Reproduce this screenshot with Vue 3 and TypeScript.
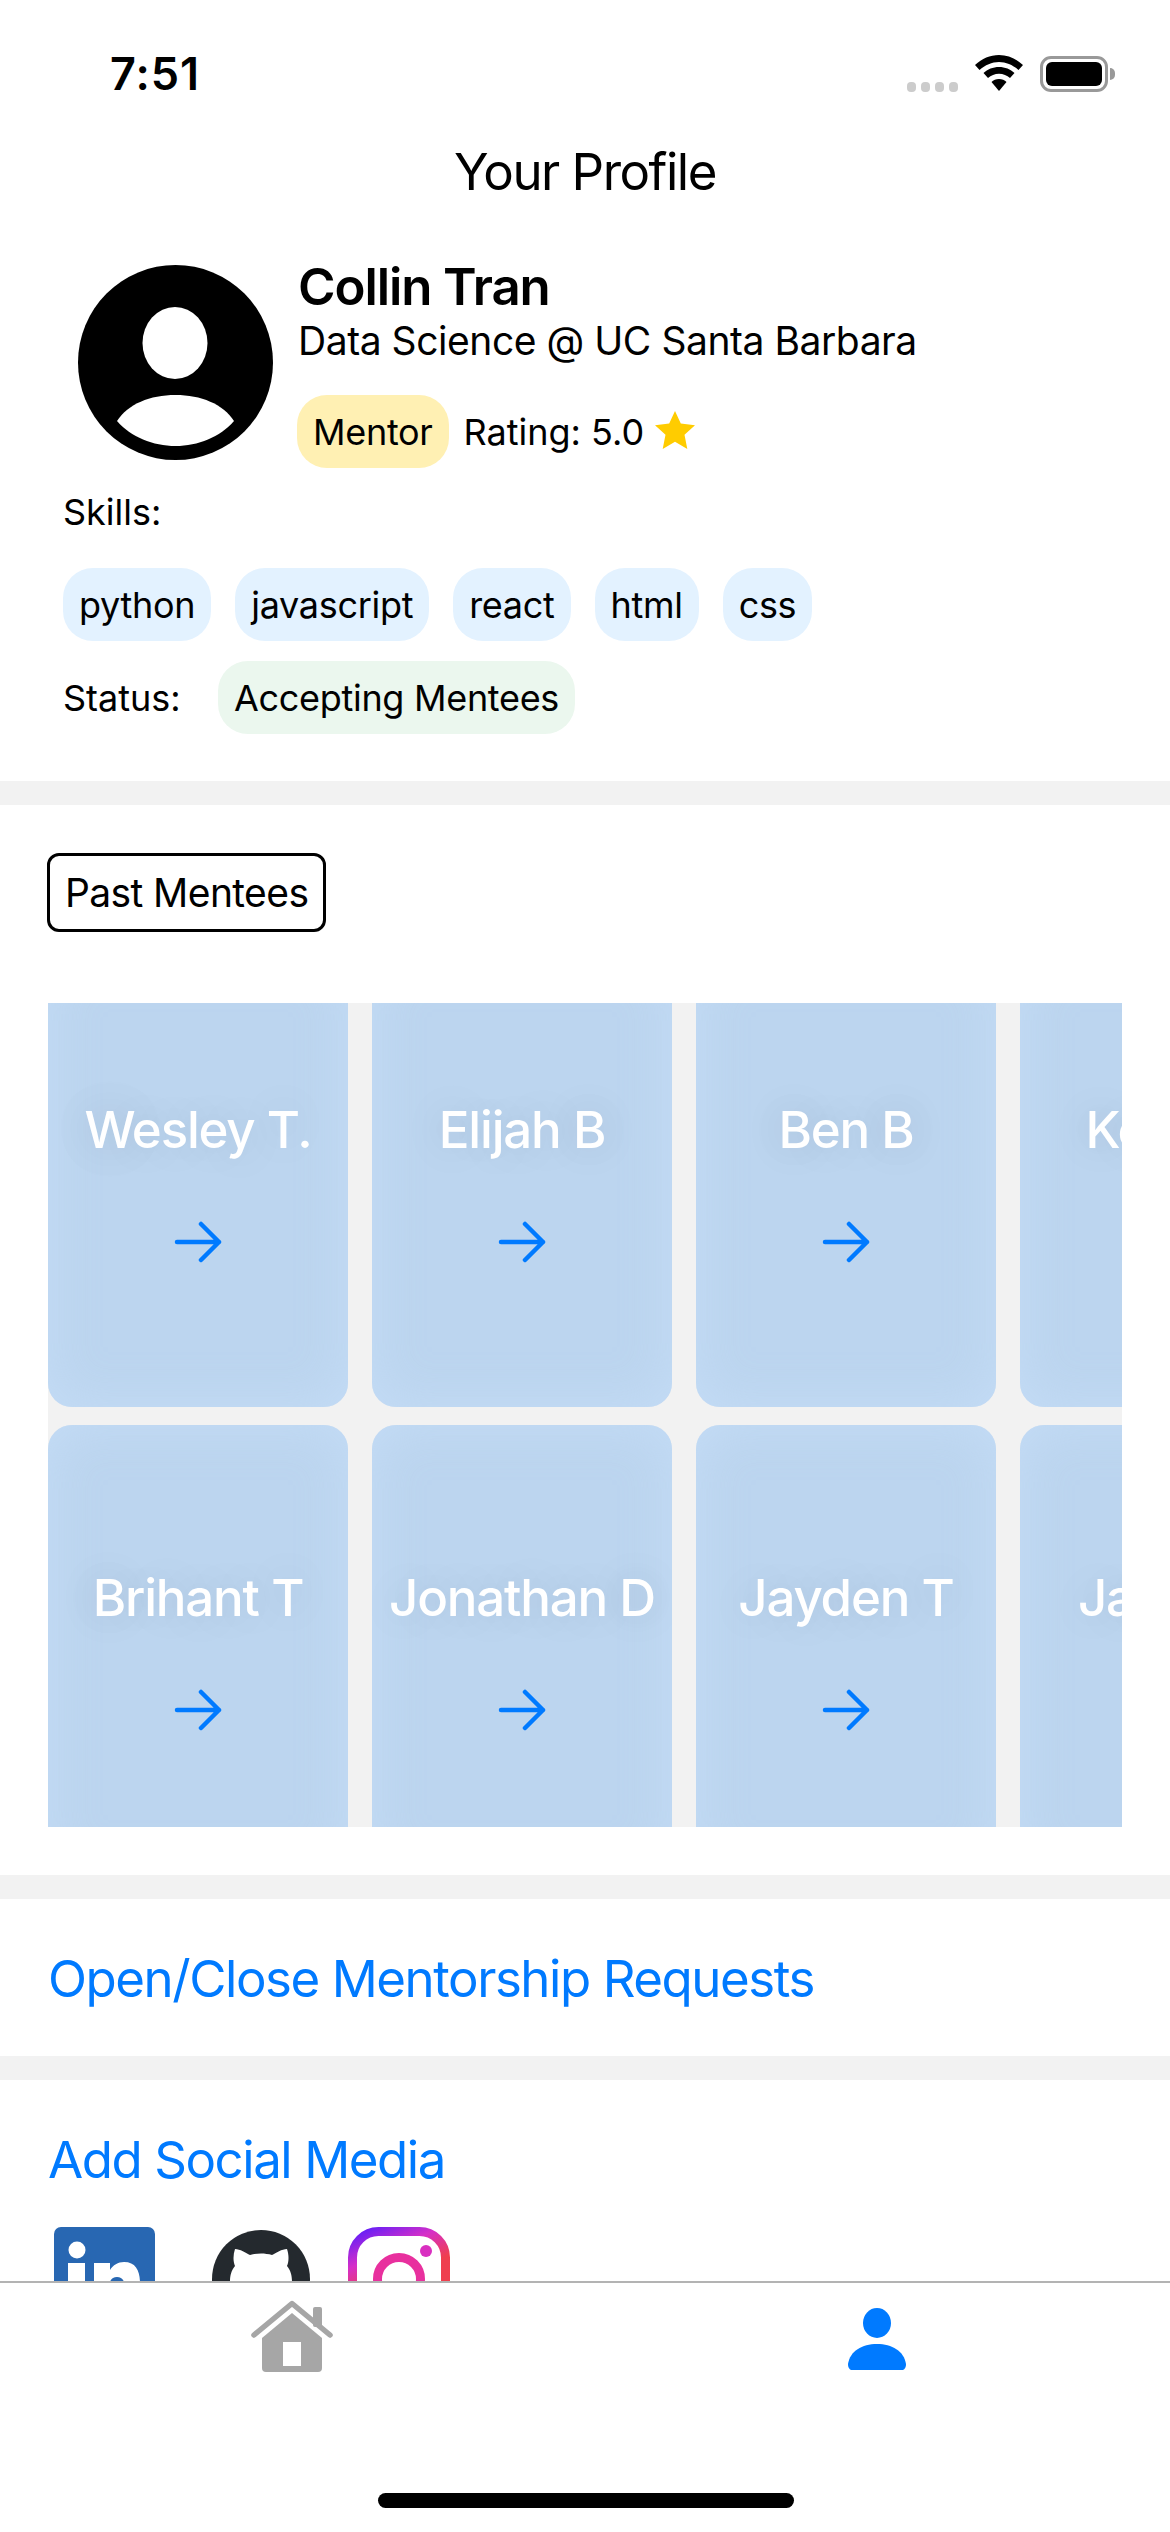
<script setup lang="ts">
const skills: string[] = ['python', 'javascript', 'react', 'html', 'css']
const mentees: string[] = ['Wesley T.', 'Elijah B', 'Ben B', 'Kevin L', 'Brihant T', 'Jonathan D', 'Jayden T', 'Jacob L']
</script>

<template>
  <div class="screen">
    <div class="scroll">
      <header class="status">
        <span class="time">7:51</span>
        <div class="status-icons">
          <div class="dots"><i></i><i></i><i></i><i></i></div>
          <svg class="wifi" width="48" height="36" viewBox="0 0 48 36">
            <path d="M24 0C15 0 7 3.600 0 10l4.500 5C10 10 17 7 24 7s14 3 19.500 8L48 10C41 3.600 33 0 24 0z" fill="#000" />
            <path d="M24 12c-6 0-11.500 2.300-15.500 6l4.500 5c3-2.700 6.800-4.300 11-4.300S32 20.300 35 23l4.500-5C35.500 14.300 30 12 24 12z" fill="#000" />
            <path d="M24 24c-3 0-5.700 1.100-7.500 3L24 36l7.500-9c-1.800-1.900-4.500-3-7.500-3z" fill="#000" />
          </svg>
          <div class="battery"><div class="fill"></div></div>
          <div class="nub"></div>
        </div>
      </header>
      <h1 class="title">Your Profile</h1>

      <section class="profile">
        <div class="identity">
          <svg class="avatar" width="195" height="195" viewBox="0 0 195 195">
            <circle cx="97.500" cy="97.500" r="97.500" fill="#000" />
            <ellipse cx="97" cy="78" rx="32.500" ry="36" fill="#fff" />
            <path d="M39 156C50 139 72 130 97.500 130S145 139 156 156C142 172 120 181 97.500 181S53 172 39 156z" fill="#fff" />
          </svg>
          <div class="info">
            <div class="name">Collin Tran</div>
            <div class="major">Data Science @ UC Santa Barbara</div>
            <div class="rating-row">
              <span class="chip mentor">Mentor</span>
              <span class="rating">Rating: 5.0</span>
              <svg class="star" width="40" height="38" viewBox="0 0 40 38">
                <path d="M20 0l5.800 12.500L40 14.300 29.500 23.700 32.300 38 20 30.700 7.700 38l2.800-14.300L0 14.300l14.200-1.800z" fill="#ffcc00" />
              </svg>
            </div>
          </div>
        </div>
        <div class="label skills-label">Skills:</div>
        <div class="skills">
          <span v-for="s in skills" :key="s" class="chip skill">{{ s }}</span>
        </div>
        <div class="status-row">
          <span class="label">Status:</span>
          <span class="chip accepting">Accepting Mentees</span>
        </div>
      </section>

      <section class="mentees">
        <div class="past">Past Mentees</div>
        <div class="grid-clip">
          <div class="grid">
            <div v-for="m in mentees" :key="m" class="card">
              <div class="card-name">{{ m }}</div>
              <svg class="arrow" width="50" height="42" viewBox="0 0 50 42">
                <path d="M4 21H46M28 3L46 21L28 39" fill="none" stroke="#007aff" stroke-width="4.500" stroke-linecap="round" stroke-linejoin="round" />
              </svg>
            </div>
          </div>
        </div>
      </section>

      <section class="link-row">
        <span class="link">Open/Close Mentorship Requests</span>
      </section>

      <section class="social">
        <span class="link">Add Social Media</span>
        <div class="social-icons">
          <svg class="li" width="101" height="101" viewBox="0 0 101 101">
            <rect width="101" height="101" rx="7" fill="#2867b2" />
            <circle cx="23" cy="23" r="8.500" fill="#fff" />
            <rect x="14" y="36" width="17" height="56" fill="#fff" />
            <path d="M40 36h16v7c3-5 8-8 14-8 12 0 16 9 16 21v36H71V60c0-6-3-10-8-10s-8 4-8 10v32H40z" fill="#fff" />
          </svg>
          <svg class="gh" width="98" height="98" viewBox="0 0 98 98">
            <circle cx="49" cy="49" r="49" fill="#24292e" />
            <path d="M23 19c5 0 11 4 15 6 7-2 15-2 22 0 4-2 10-6 15-6 2 6 2 12 0 17 4 5 5 10 5 16 0 20-14 26-31 26S18 72 18 52c0-6 1-11 5-16-2-5-2-11 0-17z" fill="#fff" />
          </svg>
          <svg class="ig" width="102" height="102" viewBox="0 0 102 102">
            <defs>
              <linearGradient id="ig" x1="0.100" y1="0" x2="0.350" y2="0.560">
                <stop offset="0" stop-color="#6a1ff5" />
                <stop offset="0.500" stop-color="#d62fc8" />
                <stop offset="1" stop-color="#ef3f4e" />
              </linearGradient>
            </defs>
            <rect x="4.500" y="4.500" width="93" height="93" rx="26" fill="none" stroke="url(#ig)" stroke-width="9" />
            <circle cx="51" cy="52" r="21.500" fill="none" stroke="#e8309e" stroke-width="9" />
            <circle cx="78" cy="24" r="6" fill="#d92fc0" />
          </svg>
        </div>
      </section>
    </div>

    <nav class="tabbar">
      <div class="tab">
        <svg class="home" width="82" height="72" viewBox="0 0 82 72">
          <path d="M41 13L11 38v30a4 4 0 0 0 4 4h52a4 4 0 0 0 4-4V38z" fill="#a6a6a6" />
          <path d="M3 35L41 3.500 79 35" fill="none" stroke="#a6a6a6" stroke-width="5.500" stroke-linecap="round" stroke-linejoin="round" />
          <rect x="62" y="7" width="9" height="20" rx="2" fill="#a6a6a6" />
          <rect x="32" y="42" width="18" height="24" fill="#fff" />
        </svg>
      </div>
      <div class="tab">
        <svg class="person" width="58" height="62" viewBox="0 0 58 62">
          <ellipse cx="29" cy="15" rx="14" ry="15" fill="#007aff" />
          <path d="M0 56C2 43 14 36 29 36S56 43 58 56C58 60 56 62 54 62H4C2 62 0 60 0 56z" fill="#007aff" />
        </svg>
      </div>
      <div class="home-bar"></div>
    </nav>
  </div>
</template>

<style>
html, body { margin: 0; background: #fff; }
</style>

<style scoped>
* { box-sizing: border-box; }
.screen {
  width: 1170px;
  height: 2532px;
  display: flex;
  flex-direction: column;
  background: #fff;
  color: #000;
  font-family: Inter, "Noto Sans", sans-serif;
  overflow: hidden;
}
.scroll { height: 2281px; overflow: hidden; flex: none; }
.status {
  height: 132px;
  padding: 50px 55px 0 110px;
  display: flex;
  justify-content: space-between;
  align-items: flex-start;
}
.time { font-size: 45px; font-weight: 600; line-height: 48px; letter-spacing: 1px; }
.status-icons { display: flex; align-items: flex-start; margin-top: 5px; }
.dots { display: flex; gap: 5px; margin-top: 27px; margin-right: 17px; }
.dots i { width: 9px; height: 10px; border-radius: 4px; background: #cccccc; display: block; }
.wifi { margin-right: 17px; }
.battery {
  width: 68px;
  height: 36px;
  border: 3px solid #999;
  border-radius: 11px;
  padding: 3px;
  margin-top: 1px;
}
.fill { width: 100%; height: 100%; background: #000; border-radius: 6px; }
.nub { width: 5px; height: 12px; background: #999; border-radius: 0 6px 6px 0; margin: 13px 0 0 2px; }
.title {
  margin: 0;
  font-size: 51px;
  font-weight: 400;
  letter-spacing: -1.500px;
  line-height: 80px;
  height: 133px;
  text-align: center;
}
.profile { height: 516px; padding: 0 63px; }
.identity { display: flex; padding-left: 15px; height: 224px; }
.avatar { flex: none; }
.info { margin-left: 25px; margin-top: -9px; }
.name { font-size: 51px; font-weight: 600; letter-spacing: -1.100px; line-height: 62px; }
.major { font-size: 39px; letter-spacing: -0.450px; line-height: 46px; }
.rating-row { display: flex; align-items: center; margin-top: 31px; margin-left: -1px; }
.chip {
  display: inline-flex;
  align-items: center;
  height: 73px;
  padding: 0 16px;
  border-radius: 30px;
  font-size: 36px;
  letter-spacing: -0.300px;
  white-space: nowrap;
}
.mentor { background: #fff0b3; }
.rating { font-size: 36px; margin-left: 15px; margin-right: 11px; }
.star { margin-top: -4px; }
.label { font-size: 36px; line-height: 46px; }
.skills { display: flex; gap: 24px; margin-top: 33px; }
.skill { background: #e3f2ff; }
.status-row { display: flex; align-items: center; margin-top: 20px; }
.status-row .label { width: 155px; }
.accepting { background: #ebf7ee; }
.mentees { border-top: 24px solid #f2f2f2; height: 1094px; padding: 48px 48px 0; }
.past {
  display: inline-flex;
  align-items: center;
  height: 79px;
  margin-left: -1px;
  padding: 0 15px;
  border: 3px solid #000;
  border-radius: 12px;
  font-size: 39px;
  letter-spacing: -0.600px;
}
.grid-clip {
  margin-top: 71px;
  height: 824px;
  overflow: hidden;
  background: #f2f2f2;
}
.grid {
  display: grid;
  grid-template-columns: repeat(4, 300px);
  grid-auto-rows: 450px;
  gap: 18px 24px;
  margin-top: -46px;
}
.card {
  background: #bcd5ef;
  box-shadow: inset 0 0 50px rgba(200, 224, 250, .7);
  border-radius: 24px;
  overflow: hidden;
  display: flex;
  flex-direction: column;
  align-items: center;
  padding-top: 142px;
}
.card-name {
  font-size: 51px;
  font-weight: 500;
  letter-spacing: -1.200px;
  line-height: 62px;
  color: #fff;
  white-space: nowrap;
  text-shadow: 0 0 40px rgba(0,0,0,.13), 0 0 90px rgba(0,0,0,.10);
}
.arrow { margin-top: 60px; }
.link-row { border-top: 24px solid #f2f2f2; height: 181px; padding: 49px 48px 0; }
.link { font-size: 51px; letter-spacing: -1.450px; line-height: 62px; color: #007aff; display: block; }
.social { border-top: 24px solid #f2f2f2; padding: 49px 48px 0; }
.social-icons { display: flex; align-items: flex-start; margin: 36px 0 0 6px; }
.gh { margin-left: 57px; margin-top: 3px; }
.ig { margin-left: 38px; }
.tabbar {
  flex: 1;
  border-top: 2px solid #b3b3b3;
  position: relative;
  display: flex;
  background: #fff;
}
.tab { width: 585px; display: flex; justify-content: center; align-items: flex-start; }
.home { margin-top: 17px; margin-right: 2px; }
.person { margin-top: 25px; margin-right: 1px; }
.home-bar {
  position: absolute;
  left: 378px;
  bottom: 24px;
  width: 416px;
  height: 15px;
  background: #000;
  border-radius: 8px;
}
</style>
